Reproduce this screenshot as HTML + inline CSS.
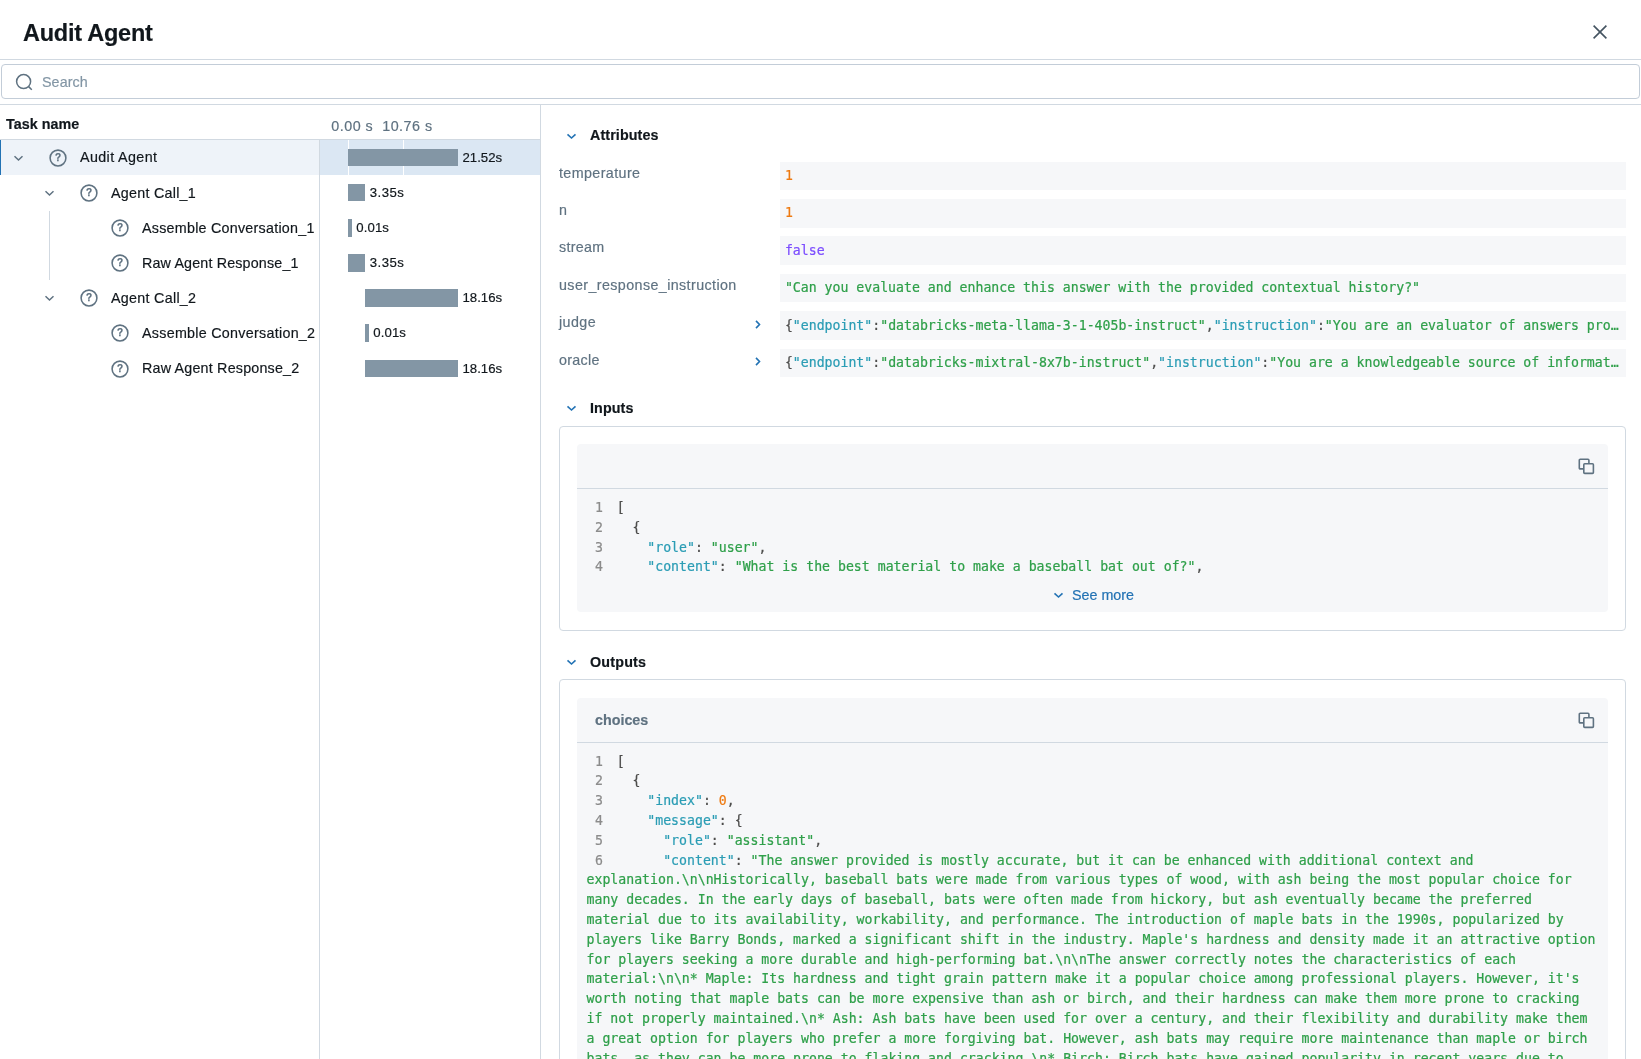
<!DOCTYPE html>
<html lang="en">
<head>
<meta charset="utf-8">
<title>Audit Agent</title>
<style>
*{box-sizing:border-box;margin:0;padding:0}
html,body{width:1641px;height:1059px;overflow:hidden;background:#fff}
body{-webkit-text-stroke:0.18px currentColor;will-change:transform;position:relative;font-family:"Liberation Sans",sans-serif;font-size:14.3px;line-height:22px;color:#11171c}
.abs{position:absolute}
.hl{position:absolute;height:1px;background:#d1d9e1}
.vl{position:absolute;width:1px;background:#d1d9e1}
.title{position:absolute;left:23px;top:18.5px;font-size:23.5px;line-height:28px;font-weight:700;letter-spacing:-0.24px;color:#11171c;white-space:nowrap}
.search{position:absolute;left:1px;top:64px;width:1639px;height:34.5px;border:1px solid #c3cdd8;border-radius:4px;background:#fff}
.search span{position:absolute;left:40px;top:5.5px;color:#8396a5;white-space:nowrap;letter-spacing:0.08px}
.t{position:absolute;white-space:nowrap}
.sec{color:#5f7281}
.b{font-weight:700}
.lab{position:absolute;left:559px;color:#5f7281;white-space:nowrap}
.val{position:absolute;left:780px;width:845.6px;background:#f6f7f9;font-family:"DejaVu Sans Mono","Liberation Mono",monospace;font-size:13.2px;line-height:20px;white-space:nowrap;overflow:hidden;color:#4d4d4c}
.val>span{position:absolute;left:4.9px}
.card{position:absolute;left:559px;width:1067px;border:1px solid #d1d9e1;border-radius:4px;background:#fff}
.gray{position:absolute;left:577px;width:1031px;background:#f6f7f9;border-radius:4px}
.code{position:absolute;left:586.5px;font-family:"DejaVu Sans Mono","Liberation Mono",monospace;font-size:13.2px;line-height:19.8px;white-space:pre;color:#4d4d4c;letter-spacing:0.005px}
.ln{display:inline-block;width:29px;padding-right:12.5px;text-align:right;color:#8c8c8c}
.code,.val{-webkit-text-stroke:0.22px currentColor}
.k{color:#2b9db5}.s{color:#2fa04a}.n{color:#ee7a11}.bo{color:#7c4dff}
.br{position:relative;left:1.2px}
.h{position:absolute;font-weight:700;white-space:nowrap}
.link{color:#2272b4}
</style>
</head>
<body>
<div class="title">Audit Agent</div>
<svg class="abs" style="left:1592px;top:24px" width="16" height="16" viewBox="0 0 16 16"><path d="M1.6 1.6 L14.4 14.4 M14.4 1.6 L1.6 14.4" stroke="#445461" stroke-width="1.6" fill="none"/></svg>
<div class="hl" style="left:0;top:59px;width:1641px"></div>
<div class="search"><svg class="abs" style="left:13px;top:8.2px" width="18" height="18" viewBox="0 0 18 18"><circle cx="8.6" cy="8.6" r="7" stroke="#5f7281" stroke-width="1.5" fill="none"/><path d="M13.6 13.6 L16.8 16.8" stroke="#5f7281" stroke-width="1.5"/></svg><span>Search</span></div>
<div class="hl" style="left:0;top:104px;width:1641px"></div>
<div class="t b" style="left:6px;top:113px;letter-spacing:0.05px">Task name</div>
<div class="t sec" style="left:331.3px;top:115px;letter-spacing:0.5px">0.00 s</div>
<div class="t sec" style="left:382.2px;top:115px;letter-spacing:0.5px">10.76 s</div>
<div class="hl" style="left:0;top:139px;width:540px"></div>
<div class="vl" style="left:540px;top:105px;height:954px"></div>
<div class="abs" style="left:0;top:140px;width:319px;height:35px;background:#eef3f9"></div><div class="abs" style="left:319px;top:140px;width:221px;height:35px;background:#dbe7f3"></div><div class="abs" style="left:0;top:140px;width:1.2px;height:35px;background:#2272b4"></div>
<div class="abs" style="left:348px;top:140px;width:1px;height:35px;background:#fff"></div><div class="abs" style="left:403px;top:140px;width:1px;height:35px;background:#fff"></div>
<svg class="abs" style="left:13.2px;top:155.01px" width="11" height="7" viewBox="0 0 11 7"><path d="M1.5 1.3 L5.5 5.0 L9.5 1.3" stroke="#5f7281" stroke-width="1.5" fill="none"/></svg>
<svg class="abs" style="left:48.8px;top:148.5px" width="18" height="18" viewBox="0 0 18 18"><circle cx="9" cy="9" r="7.9" stroke="#5f7281" stroke-width="1.55" fill="none"/><text x="9" y="12.4" text-anchor="middle" font-family="Liberation Sans, sans-serif" font-size="10" font-weight="700" fill="#5f7281" stroke="#5f7281" stroke-width="0.25">?</text></svg>
<div class="t" style="left:80.0px;top:146px;letter-spacing:0.38px">Audit Agent</div>
<div class="abs" style="left:348px;top:149px;width:110.0px;height:17px;background:#8396a5"></div>
<div class="t" style="left:462.5px;top:147px;font-size:13.2px;letter-spacing:0px">21.52s</div>
<svg class="abs" style="left:44.2px;top:189.91px" width="11" height="7" viewBox="0 0 11 7"><path d="M1.5 1.3 L5.5 5.0 L9.5 1.3" stroke="#5f7281" stroke-width="1.5" fill="none"/></svg>
<svg class="abs" style="left:79.8px;top:183.5px" width="18" height="18" viewBox="0 0 18 18"><circle cx="9" cy="9" r="7.9" stroke="#5f7281" stroke-width="1.55" fill="none"/><text x="9" y="12.4" text-anchor="middle" font-family="Liberation Sans, sans-serif" font-size="10" font-weight="700" fill="#5f7281" stroke="#5f7281" stroke-width="0.25">?</text></svg>
<div class="t" style="left:111.0px;top:182px;letter-spacing:0.26px">Agent Call_1</div>
<div class="abs" style="left:348px;top:184px;width:17.2px;height:17px;background:#8396a5"></div>
<div class="t" style="left:369.7px;top:182px;font-size:13.2px;letter-spacing:0.5px">3.35s</div>
<svg class="abs" style="left:110.8px;top:218.5px" width="18" height="18" viewBox="0 0 18 18"><circle cx="9" cy="9" r="7.9" stroke="#5f7281" stroke-width="1.55" fill="none"/><text x="9" y="12.4" text-anchor="middle" font-family="Liberation Sans, sans-serif" font-size="10" font-weight="700" fill="#5f7281" stroke="#5f7281" stroke-width="0.25">?</text></svg>
<div class="t" style="left:142.0px;top:217px;letter-spacing:0.25px">Assemble Conversation_1</div>
<div class="abs" style="left:348px;top:219px;width:3.8px;height:18px;background:#8396a5"></div>
<div class="t" style="left:356.3px;top:217px;font-size:13.2px;letter-spacing:0.1px">0.01s</div>
<svg class="abs" style="left:110.8px;top:253.5px" width="18" height="18" viewBox="0 0 18 18"><circle cx="9" cy="9" r="7.9" stroke="#5f7281" stroke-width="1.55" fill="none"/><text x="9" y="12.4" text-anchor="middle" font-family="Liberation Sans, sans-serif" font-size="10" font-weight="700" fill="#5f7281" stroke="#5f7281" stroke-width="0.25">?</text></svg>
<div class="t" style="left:142.0px;top:252px;letter-spacing:0.16px">Raw Agent Response_1</div>
<div class="abs" style="left:348px;top:254px;width:17.2px;height:18px;background:#8396a5"></div>
<div class="t" style="left:369.7px;top:252px;font-size:13.2px;letter-spacing:0.5px">3.35s</div>
<svg class="abs" style="left:44.2px;top:295.01px" width="11" height="7" viewBox="0 0 11 7"><path d="M1.5 1.3 L5.5 5.0 L9.5 1.3" stroke="#5f7281" stroke-width="1.5" fill="none"/></svg>
<svg class="abs" style="left:79.8px;top:288.6px" width="18" height="18" viewBox="0 0 18 18"><circle cx="9" cy="9" r="7.9" stroke="#5f7281" stroke-width="1.55" fill="none"/><text x="9" y="12.4" text-anchor="middle" font-family="Liberation Sans, sans-serif" font-size="10" font-weight="700" fill="#5f7281" stroke="#5f7281" stroke-width="0.25">?</text></svg>
<div class="t" style="left:111.0px;top:287px;letter-spacing:0.29px">Agent Call_2</div>
<div class="abs" style="left:365px;top:289px;width:93.0px;height:18px;background:#8396a5"></div>
<div class="t" style="left:462.5px;top:287px;font-size:13.2px;letter-spacing:0px">18.16s</div>
<svg class="abs" style="left:110.8px;top:323.7px" width="18" height="18" viewBox="0 0 18 18"><circle cx="9" cy="9" r="7.9" stroke="#5f7281" stroke-width="1.55" fill="none"/><text x="9" y="12.4" text-anchor="middle" font-family="Liberation Sans, sans-serif" font-size="10" font-weight="700" fill="#5f7281" stroke="#5f7281" stroke-width="0.25">?</text></svg>
<div class="t" style="left:142.0px;top:322px;letter-spacing:0.28px">Assemble Conversation_2</div>
<div class="abs" style="left:365px;top:324px;width:3.8px;height:18px;background:#8396a5"></div>
<div class="t" style="left:373.3px;top:322px;font-size:13.2px;letter-spacing:0.1px">0.01s</div>
<svg class="abs" style="left:110.8px;top:359.5px" width="18" height="18" viewBox="0 0 18 18"><circle cx="9" cy="9" r="7.9" stroke="#5f7281" stroke-width="1.55" fill="none"/><text x="9" y="12.4" text-anchor="middle" font-family="Liberation Sans, sans-serif" font-size="10" font-weight="700" fill="#5f7281" stroke="#5f7281" stroke-width="0.25">?</text></svg>
<div class="t" style="left:142.0px;top:357px;letter-spacing:0.2px">Raw Agent Response_2</div>
<div class="abs" style="left:365px;top:360px;width:93.0px;height:17px;background:#8396a5"></div>
<div class="t" style="left:462.5px;top:358px;font-size:13.2px;letter-spacing:0px">18.16s</div>
<div class="vl" style="left:49px;top:210.5px;height:69.5px"></div>
<div class="vl" style="left:319px;top:140px;height:919px"></div>
<svg class="abs" style="left:566.1px;top:132.76px" width="11" height="7" viewBox="0 0 11 7"><path d="M1.5 1.3 L5.5 5.0 L9.5 1.3" stroke="#2272b4" stroke-width="1.6" fill="none"/></svg>
<div class="h" style="left:590px;top:124.0px;letter-spacing:0.1px">Attributes</div>
<svg class="abs" style="left:566.1px;top:404.96px" width="11" height="7" viewBox="0 0 11 7"><path d="M1.5 1.3 L5.5 5.0 L9.5 1.3" stroke="#2272b4" stroke-width="1.6" fill="none"/></svg>
<div class="h" style="left:590px;top:397.0px;letter-spacing:0.1px">Inputs</div>
<svg class="abs" style="left:566.1px;top:658.96px" width="11" height="7" viewBox="0 0 11 7"><path d="M1.5 1.3 L5.5 5.0 L9.5 1.3" stroke="#2272b4" stroke-width="1.6" fill="none"/></svg>
<div class="h" style="left:590px;top:651.0px;letter-spacing:0.2px">Outputs</div>
<div class="lab" style="top:162px;letter-spacing:0.39px">temperature</div>
<div class="val" style="top:162px;height:28px"><span style="top:4px"><span class="n">1</span></span></div>
<div class="lab" style="top:199px;letter-spacing:0.12px">n</div>
<div class="val" style="top:199px;height:29px"><span style="top:4px"><span class="n">1</span></span></div>
<div class="lab" style="top:236px;letter-spacing:0.3px">stream</div>
<div class="val" style="top:236px;height:29px"><span style="top:5px"><span class="bo">false</span></span></div>
<div class="lab" style="top:274px;letter-spacing:0.4px">user_response_instruction</div>
<div class="val" style="top:274px;height:28px"><span style="top:4px"><span class="s">"Can you evaluate and enhance this answer with the provided contextual history?"</span></span></div>
<div class="lab" style="top:311px;letter-spacing:0.42px">judge</div>
<svg class="abs" style="left:754.25px;top:319.30px" width="8" height="11" viewBox="0 0 8 11"><path d="M2 1.9 L5.5 5.5 L2 9.1" stroke="#2272b4" stroke-width="1.6" fill="none"/></svg>
<div class="val" style="top:311px;height:29px"><span style="top:5px">{<span class="k">"endpoint"</span>:<span class="s">"databricks-meta-llama-3-1-405b-instruct"</span>,<span class="k">"instruction"</span>:<span class="s">"You are an evaluator of answers pro…</span></span></div>
<div class="lab" style="top:349px;letter-spacing:0.32px">oracle</div>
<svg class="abs" style="left:754.25px;top:356.20px" width="8" height="11" viewBox="0 0 8 11"><path d="M2 1.9 L5.5 5.5 L2 9.1" stroke="#2272b4" stroke-width="1.6" fill="none"/></svg>
<div class="val" style="top:349px;height:28px"><span style="top:4px">{<span class="k">"endpoint"</span>:<span class="s">"databricks-mixtral-8x7b-instruct"</span>,<span class="k">"instruction"</span>:<span class="s">"You are a knowledgeable source of informat…</span></span></div>
<div class="card" style="top:426px;height:205px"></div>
<div class="gray" style="top:444px;height:167.5px"></div>
<div class="hl" style="left:577px;top:488px;width:1031px"></div>
<svg class="abs" style="left:1577.7px;top:458.05px" width="17" height="17" viewBox="0 0 17 17"><rect x="1.3" y="1.3" width="9.6" height="9.6" rx="0.9" stroke="#5f7281" stroke-width="1.6" fill="none"/><rect x="5.8" y="5.8" width="9.6" height="9.6" rx="0.9" stroke="#5f7281" stroke-width="1.6" fill="#f6f7f9"/></svg>
<div class="code" style="top:497.95px"><span class="ln">1</span><span class="br">[</span>
<span class="ln">2</span>  <span class="br">{</span>
<span class="ln">3</span>    <span class="k">"role"</span>: <span class="s">"user"</span>,
<span class="ln">4</span>    <span class="k">"content"</span>: <span class="s">"What is the best material to make a baseball bat out of?"</span>,</div>
<svg class="abs" style="left:1053.2px;top:591.86px" width="11" height="7" viewBox="0 0 11 7"><path d="M1.5 1.3 L5.5 5.0 L9.5 1.3" stroke="#2272b4" stroke-width="1.6" fill="none"/></svg>
<div class="t link" style="left:1072px;top:583.7px">See more</div>
<div class="card" style="top:679px;height:400px"></div>
<div class="gray" style="top:698px;height:400px"></div>
<div class="hl" style="left:577px;top:742px;width:1031px"></div>
<div class="t sec" style="left:595px;top:708.6px;font-weight:700">choices</div>
<svg class="abs" style="left:1577.7px;top:712.05px" width="17" height="17" viewBox="0 0 17 17"><rect x="1.3" y="1.3" width="9.6" height="9.6" rx="0.9" stroke="#5f7281" stroke-width="1.6" fill="none"/><rect x="5.8" y="5.8" width="9.6" height="9.6" rx="0.9" stroke="#5f7281" stroke-width="1.6" fill="#f6f7f9"/></svg>
<div class="code" style="top:751.55px"><span class="ln">1</span><span class="br">[</span>
<span class="ln">2</span>  <span class="br">{</span>
<span class="ln">3</span>    <span class="k">"index"</span>: <span class="n">0</span>,
<span class="ln">4</span>    <span class="k">"message"</span>: {
<span class="ln">5</span>      <span class="k">"role"</span>: <span class="s">"assistant"</span>,
<span class="ln">6</span>      <span class="k">"content"</span>: <span class="s">"The answer provided is mostly accurate, but it can be enhanced with additional context and</span>
<span class="s">explanation.\n\nHistorically, baseball bats were made from various types of wood, with ash being the most popular choice for</span>
<span class="s">many decades. In the early days of baseball, bats were often made from hickory, but ash eventually became the preferred</span>
<span class="s">material due to its availability, workability, and performance. The introduction of maple bats in the 1990s, popularized by</span>
<span class="s">players like Barry Bonds, marked a significant shift in the industry. Maple's hardness and density made it an attractive option</span>
<span class="s">for players seeking a more durable and high-performing bat.\n\nThe answer correctly notes the characteristics of each</span>
<span class="s">material:\n\n* Maple: Its hardness and tight grain pattern make it a popular choice among professional players. However, it's</span>
<span class="s">worth noting that maple bats can be more expensive than ash or birch, and their hardness can make them more prone to cracking</span>
<span class="s">if not properly maintained.\n* Ash: Ash bats have been used for over a century, and their flexibility and durability make them</span>
<span class="s">a great option for players who prefer a more forgiving bat. However, ash bats may require more maintenance than maple or birch</span>
<span class="s">bats, as they can be more prone to flaking and cracking.\n* Birch: Birch bats have gained popularity in recent years due to</span></div>
</body>
</html>
